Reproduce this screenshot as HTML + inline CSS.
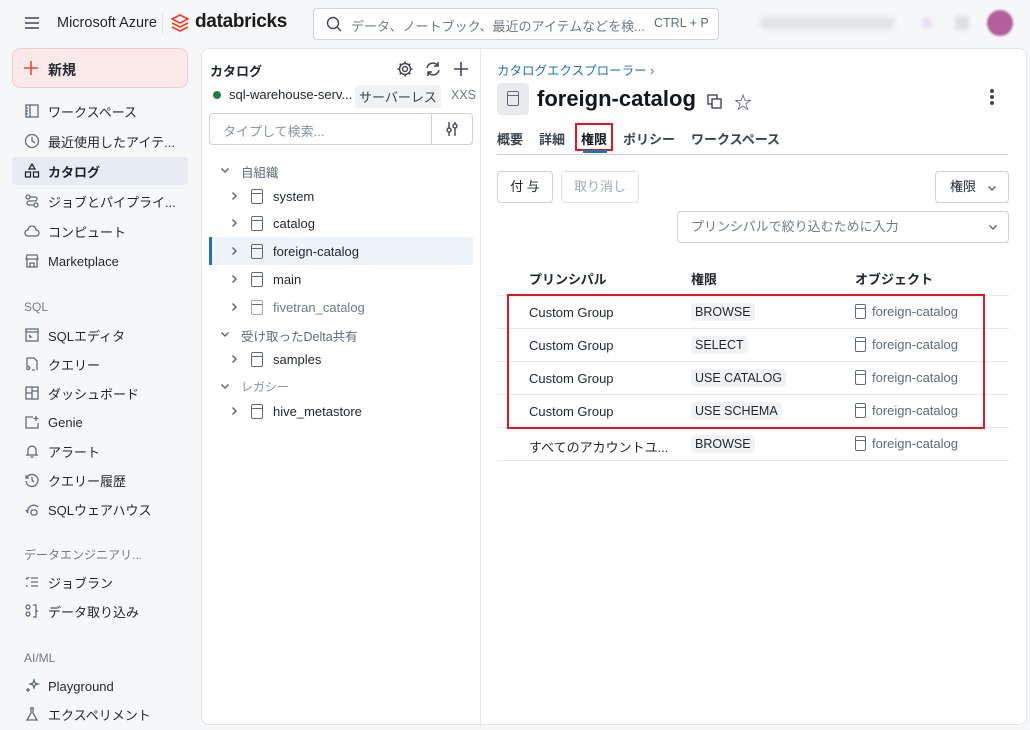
<!DOCTYPE html>
<html><head><meta charset="utf-8"><style>
*{box-sizing:border-box;margin:0;padding:0}
body{width:1030px;height:730px;background:#f6f7f9;font-family:"Liberation Sans","Noto Sans CJK JP",sans-serif;font-size:13px;color:#1f272d;position:relative;overflow:hidden}
.a{position:absolute;white-space:nowrap}
.nav{position:absolute;left:12px;width:176px;height:28px;display:flex;align-items:center;padding-left:12px;font-size:13px;color:#1f272d}
.nav svg{width:16px;height:16px;margin-right:8px;stroke:#5f6b76;fill:none;stroke-width:1.3}
.sec{position:absolute;left:24px;font-size:12px;color:#6f7a85}
.tree{position:absolute;left:209px;width:264px;height:28px;display:flex;align-items:center;font-size:13px}
.chev{width:42px;padding-left:20px;display:flex;align-items:center}
.db{display:inline-block;width:12px;height:15px;border:1.4px solid #5f6b76;border-radius:2px;margin:0 10px 0 0;position:relative}
.db:after{content:"";position:absolute;left:0;right:0;top:3px;border-top:1.4px solid #5f6b76}
.row{position:absolute;left:497px;width:512px;height:33px;border-bottom:1px solid #e6e9ec}
.tag{position:absolute;left:194px;top:7px;background:#f0f2f4;border-radius:4px;padding:2px 4px;font-size:12.5px}
.pr{position:absolute;left:32px;top:9px;font-size:13px}
.ob{position:absolute;left:358px;top:8px;color:#5f6b76;font-size:13px;display:flex;align-items:center}
.ob .db{margin:0 6px 0 0;width:11px;height:15px}
</style></head><body>
<svg width="0" height="0" style="position:absolute"><defs>
<symbol id="cr" viewBox="0 0 10 10"><path d="M3.5 1.5l3.5 3.5-3.5 3.5" fill="none" stroke="#5f6b76" stroke-width="1.5"/></symbol>
<symbol id="cd" viewBox="0 0 10 10"><path d="M1.5 3.5l3.5 3.5 3.5-3.5" fill="none" stroke="#5f6b76" stroke-width="1.5"/></symbol>
</defs></svg>
<!-- top bar -->
<svg class="a" style="left:25px;top:17px" width="14" height="12"><path d="M0 1h14M0 6h14M0 11h14" stroke="#445" stroke-width="1.5"/></svg>
<div class="a" style="left:57px;top:15px;font-size:14.5px;color:#1f272d">Microsoft Azure</div>
<div class="a" style="left:162px;top:12px;height:22px;border-left:1px solid #e3e5e8"></div>
<svg class="a" style="left:171px;top:14px" width="18" height="18"><path d="M9 1L17 5 9 9 1 5z M1 9l8 4 8-4 M1 13l8 4 8-4" fill="none" stroke="#ff3621" stroke-width="1.6"/></svg>
<div class="a" style="left:195px;top:11px;font-size:19px;font-weight:bold;color:#1b1b1b;letter-spacing:-0.3px">databricks</div>
<div class="a" style="left:313px;top:8px;width:406px;height:32px;border:1px solid #cbd2d9;border-radius:4px;background:#fff"></div>
<svg class="a" style="left:326px;top:16px" width="16" height="16"><circle cx="7" cy="7" r="5.5" stroke="#445" stroke-width="1.4" fill="none"/><path d="M11 11l4 4" stroke="#445" stroke-width="1.4"/></svg>
<div class="a" style="left:351px;top:16px;color:#6f7a85;font-size:13px">データ、ノートブック、最近のアイテムなどを検...</div>
<div class="a" style="left:654px;top:16px;color:#5f6b76;font-size:12.5px">CTRL + P</div>
<div class="a" style="left:760px;top:17px;width:135px;height:12px;background:#dfe1e4;border-radius:6px;filter:blur(3px)"></div>
<div class="a" style="left:922px;top:18px;width:10px;height:10px;background:#e6d8f5;border-radius:5px;filter:blur(2px)"></div>
<div class="a" style="left:955px;top:16px;width:14px;height:14px;background:#dde0e4;filter:blur(2px)"></div>
<div class="a" style="left:987px;top:10px;width:26px;height:26px;background:#b35f9c;border-radius:13px;filter:blur(1px)"></div>
<!-- sidebar -->
<div class="a" style="left:12px;top:48px;width:176px;height:40px;background:#fbe9ea;border:1px solid #f5c8cb;border-radius:8px"></div>
<svg class="a" style="left:24px;top:61px" width="14" height="14"><path d="M7 0v14M0 7h14" stroke="#e8453c" stroke-width="1.6"/></svg>
<div class="a" style="left:48px;top:60px;font-size:14px;font-weight:bold">新規</div>
<div class="nav" style="top:97px"><svg viewBox="0 0 16 16"><rect x="2" y="2" width="12" height="12"/><path d="M6 2v12M2 5h2M2 8h2M2 11h2"/></svg>ワークスペース</div>
<div class="nav" style="top:127px"><svg viewBox="0 0 16 16"><circle cx="8" cy="8" r="6.5"/><path d="M8 4v4l3 2"/></svg>最近使用したアイテ...</div>
<div class="nav" style="top:157px;background:#e6ecf1;border-radius:4px;font-weight:bold"><svg viewBox="0 0 16 16" style="stroke:#1f272d"><path d="M8 1l3 5H5z"/><rect x="1.5" y="9" width="5" height="5"/><rect x="9.5" y="9" width="5" height="5"/></svg>カタログ</div>
<div class="nav" style="top:187px"><svg viewBox="0 0 16 16"><circle cx="4" cy="4" r="2"/><circle cx="12" cy="12" r="2"/><path d="M6 4h5a2 2 0 010 4H5a2 2 0 000 4h5"/></svg>ジョブとパイプライ...</div>
<div class="nav" style="top:217px"><svg viewBox="0 0 16 16"><path d="M4 13h8a3 3 0 000-6 4 4 0 00-8 0 3 3 0 000 6z"/></svg>コンピュート</div>
<div class="nav" style="top:247px"><svg viewBox="0 0 16 16"><path d="M2 6l1-4h10l1 4zM3 6v8h10V6M6 14v-4h4v4"/></svg>Marketplace</div>
<div class="sec" style="top:300px">SQL</div>
<div class="nav" style="top:321px"><svg viewBox="0 0 16 16"><rect x="2" y="2" width="12" height="12"/><path d="M2 5h12M5 8l2 2-2 0"/></svg>SQLエディタ</div>
<div class="nav" style="top:350px"><svg viewBox="0 0 16 16"><path d="M3 14V2h7l3 3v9M4 10l2 2-2 2M8 14h3"/></svg>クエリー</div>
<div class="nav" style="top:379px"><svg viewBox="0 0 16 16"><rect x="2" y="2" width="12" height="12"/><path d="M8 2v12M2 8h6M8 6h6"/></svg>ダッシュボード</div>
<div class="nav" style="top:408px"><svg viewBox="0 0 16 16"><path d="M14 9v5H2V3h7M12 2v5M9.5 4.5h5"/></svg>Genie</div>
<div class="nav" style="top:437px"><svg viewBox="0 0 16 16"><path d="M4 11V7a4 4 0 018 0v4l1 1H3zM6.5 14h3"/></svg>アラート</div>
<div class="nav" style="top:466px"><svg viewBox="0 0 16 16"><path d="M2.5 6a6 6 0 11-.5 3M2 3v3h3M8 5v3l2 2"/></svg>クエリー履歴</div>
<div class="nav" style="top:495px"><svg viewBox="0 0 16 16"><path d="M4 12a6 6 0 0110-6M2 9l2 3"/><rect x="7" y="9" width="6" height="5" rx="2"/></svg>SQLウェアハウス</div>
<div class="sec" style="top:546px">データエンジニアリ...</div>
<div class="nav" style="top:568px"><svg viewBox="0 0 16 16"><path d="M2 4l1 1 2-2M7 4h7M7 8h7M2 12h2M7 12h7"/></svg>ジョブラン</div>
<div class="nav" style="top:597px"><svg viewBox="0 0 16 16"><circle cx="4" cy="4" r="2"/><circle cx="4" cy="11" r="2"/><path d="M9 2h3v12H9M12 8h2"/></svg>データ取り込み</div>
<div class="sec" style="top:651px">AI/ML</div>
<div class="nav" style="top:672px"><svg viewBox="0 0 16 16"><path d="M10 2l1 3 3 1-3 1-1 3-1-3-3-1 3-1zM4 10v4M2 12h4"/></svg>Playground</div>
<div class="nav" style="top:700px"><svg viewBox="0 0 16 16"><path d="M6 2h4M7 2v5l-4 7h10l-4-7V2"/></svg>エクスペリメント</div>
<!-- main container -->
<div class="a" style="left:201px;top:48px;width:826px;height:677px;background:#fff;border:1px solid #e3e6ea;border-radius:8px"></div>
<div class="a" style="left:480px;top:49px;height:675px;border-left:1px solid #e6e9ec"></div>
<!-- catalog panel -->
<div class="a" style="left:210px;top:61px;font-size:13px;font-weight:bold">カタログ</div>
<svg class="a" style="left:396px;top:60px" width="18" height="18" viewBox="0 0 18 18"><circle cx="9" cy="9" r="2.5" fill="none" stroke="#445" stroke-width="1.4"/><path d="M9 1.5v2.5M9 14v2.5M1.5 9H4M14 9h2.5M3.7 3.7l1.8 1.8M12.5 12.5l1.8 1.8M3.7 14.3l1.8-1.8M12.5 5.5l1.8-1.8" stroke="#445" stroke-width="1.6"/><circle cx="9" cy="9" r="5.5" fill="none" stroke="#445" stroke-width="1.4"/></svg>
<svg class="a" style="left:424px;top:60px" width="18" height="18" viewBox="0 0 18 18"><path d="M3 8a6 6 0 0111-2M15 10a6 6 0 01-11 2M14 2v4h-4M4 16v-4h4" fill="none" stroke="#445" stroke-width="1.5"/></svg>
<svg class="a" style="left:453px;top:61px" width="16" height="16"><path d="M8 1v14M1 8h14" stroke="#445" stroke-width="1.6"/></svg>
<div class="a" style="left:213px;top:91px;width:8px;height:8px;border-radius:4px;background:#277c43"></div>
<div class="a" style="left:229px;top:87px;font-size:13px">sql-warehouse-serv...</div>
<div class="a" style="left:355px;top:85px;background:#f0f2f4;border-radius:3px;padding:2px 4px;font-size:13px;color:#3a434b">サーバーレス</div>
<div class="a" style="left:451px;top:88px;font-size:12.5px;color:#6f7a85">XXS</div>
<div class="a" style="left:209px;top:113px;width:264px;height:32px;border:1px solid #cbd2d9;border-radius:4px"></div>
<div class="a" style="left:431px;top:114px;height:30px;border-left:1px solid #cbd2d9"></div>
<div class="a" style="left:223px;top:121px;color:#8a949e;font-size:13px">タイプして検索...</div>
<svg class="a" style="left:445px;top:121px" width="14" height="16"><path d="M4 1v14M10 1v14" stroke="#445" stroke-width="1.4"/><circle cx="4" cy="9" r="2" fill="#fff" stroke="#445" stroke-width="1.4"/><circle cx="10" cy="5" r="2" fill="#fff" stroke="#445" stroke-width="1.4"/></svg>
<svg class="a" style="left:220px;top:165px" width="10" height="10"><use href="#cd"/></svg>
<div class="a" style="left:241px;top:162px;color:#5f6b76;font-size:12.5px">自組織</div>
<div class="tree" style="top:182px"><span class="chev"><svg width="10" height="10"><use href="#cr"/></svg></span><span class="db"></span>system</div>
<div class="tree" style="top:209px"><span class="chev"><svg width="10" height="10"><use href="#cr"/></svg></span><span class="db"></span>catalog</div>
<div class="tree" style="top:237px;background:#eef3f9;border-left:3px solid #2272b4"><span class="chev" style="padding-left:17px;width:39px"><svg width="10" height="10"><use href="#cr"/></svg></span><span class="db"></span>foreign-catalog</div>
<div class="tree" style="top:265px"><span class="chev"><svg width="10" height="10"><use href="#cr"/></svg></span><span class="db"></span>main</div>
<div class="tree" style="top:293px;color:#6f7a85"><span class="chev"><svg width="10" height="10"><use href="#cr"/></svg></span><span class="db" style="border-color:#a0a8b0"></span>fivetran_catalog</div>
<svg class="a" style="left:220px;top:329px" width="10" height="10"><use href="#cd"/></svg>
<div class="a" style="left:241px;top:326px;color:#5f6b76;font-size:12.5px">受け取ったDelta共有</div>
<div class="tree" style="top:345px"><span class="chev"><svg width="10" height="10"><use href="#cr"/></svg></span><span class="db"></span>samples</div>
<svg class="a" style="left:220px;top:381px" width="10" height="10"><use href="#cd"/></svg>
<div class="a" style="left:241px;top:378px;color:#8a949e;font-size:12px">レガシー</div>
<div class="tree" style="top:397px"><span class="chev"><svg width="10" height="10"><use href="#cr"/></svg></span><span class="db"></span>hive_metastore</div>
<!-- right panel -->
<div class="a" style="left:497px;top:60px;color:#2272b4;font-size:12.5px">カタログエクスプローラー <span style="color:#5f6b76">›</span></div>
<div class="a" style="left:497px;top:83px;width:32px;height:32px;background:#e8ebee;border-radius:4px"></div>
<span class="a db" style="left:507px;top:91px;margin:0"></span>
<div class="a" style="left:537px;top:86px;font-size:22px;font-weight:bold;color:#11171c">foreign-catalog</div>
<svg class="a" style="left:707px;top:94px" width="15" height="15"><rect x="1" y="1" width="9" height="9" fill="none" stroke="#445" stroke-width="1.4"/><rect x="5" y="5" width="9" height="9" fill="#fff" stroke="#445" stroke-width="1.4"/></svg>
<div class="a" style="left:734px;top:89px;font-size:18px;color:#445">☆</div>
<div class="a" style="left:990px;top:89px;width:4px;height:4px;border-radius:2px;background:#445;box-shadow:0 6px 0 #445,0 12px 0 #445"></div>
<div class="a" style="left:497px;top:129px;font-size:13px;font-weight:bold;color:#3a434b">概要</div>
<div class="a" style="left:539px;top:129px;font-size:13px;font-weight:bold;color:#3a434b">詳細</div>
<div class="a" style="left:581px;top:129px;font-size:13px;font-weight:bold;color:#11171c">権限</div>
<div class="a" style="left:575px;top:123px;width:38px;height:28px;border:2px solid #e4151f"></div>
<div class="a" style="left:583px;top:150px;width:24px;height:3px;background:#2272b4"></div>
<div class="a" style="left:623px;top:129px;font-size:13px;font-weight:bold;color:#3a434b">ポリシー</div>
<div class="a" style="left:691px;top:129px;font-size:13px;font-weight:bold;color:#3a434b">ワークスペース</div>
<div class="a" style="left:497px;top:154px;width:511px;border-top:1px solid #cbd2d9"></div>
<div class="a" style="left:497px;top:171px;width:56px;height:32px;border:1px solid #cbd2d9;border-radius:4px;text-align:center;line-height:30px;font-size:13px">付 与</div>
<div class="a" style="left:561px;top:171px;width:78px;height:32px;border:1px solid #dfe3e7;border-radius:4px;text-align:center;line-height:30px;font-size:13px;color:#a0a8b0">取り消し</div>
<div class="a" style="left:935px;top:171px;width:74px;height:32px;border:1px solid #cbd2d9;border-radius:4px;line-height:30px;font-size:13px;padding-left:14px">権限</div>
<svg class="a" style="left:987px;top:183px" width="10" height="10"><use href="#cd"/></svg>
<div class="a" style="left:677px;top:211px;width:332px;height:32px;border:1px solid #cbd2d9;border-radius:4px;line-height:30px;font-size:13px;padding-left:13px;color:#6f7a85">プリンシパルで絞り込むために入力</div>
<svg class="a" style="left:988px;top:222px" width="10" height="10"><use href="#cd"/></svg>
<div class="row" style="top:262px;height:34px"><span class="pr" style="font-weight:bold;top:7px">プリンシパル</span><span class="pr" style="left:194px;font-weight:bold;top:7px">権限</span><span class="pr" style="left:358px;font-weight:bold;top:7px">オブジェクト</span></div>
<div class="row" style="top:296px"><span class="pr">Custom Group</span><span class="tag">BROWSE</span><span class="ob"><span class="db"></span>foreign-catalog</span></div>
<div class="row" style="top:329px"><span class="pr">Custom Group</span><span class="tag">SELECT</span><span class="ob"><span class="db"></span>foreign-catalog</span></div>
<div class="row" style="top:362px"><span class="pr">Custom Group</span><span class="tag">USE CATALOG</span><span class="ob"><span class="db"></span>foreign-catalog</span></div>
<div class="row" style="top:395px"><span class="pr">Custom Group</span><span class="tag">USE SCHEMA</span><span class="ob"><span class="db"></span>foreign-catalog</span></div>
<div class="row" style="top:428px"><span class="pr">すべてのアカウントユ...</span><span class="tag">BROWSE</span><span class="ob"><span class="db"></span>foreign-catalog</span></div>
<div class="a" style="left:507px;top:294px;width:478px;height:135px;border:2px solid #e4151f"></div>
</body></html>
